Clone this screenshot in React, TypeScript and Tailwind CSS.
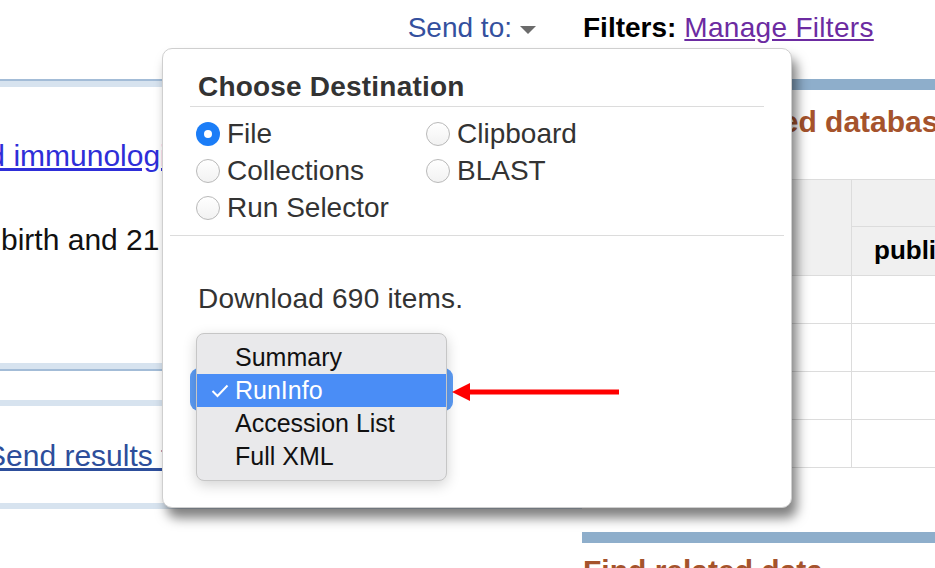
import React from 'react'

const Radio = ({ checked, label }: { checked?: boolean; label: string }) => (
  <div className="flex items-center gap-[7px]">
    {checked ? (
      <span className="w-[24px] h-[24px] rounded-full bg-[#1b7df7] flex items-center justify-center">
        <span className="w-[8px] h-[8px] rounded-full bg-white" />
      </span>
    ) : (
      <span className="w-[24px] h-[24px] rounded-full border border-[#b9b9b9] bg-gradient-to-b from-white to-[#f2f2f2]" />
    )}
    <span className="text-[28px] leading-[32px] text-[#333]">{label}</span>
  </div>
)

const App = () => {
  const items = ['Summary', 'RunInfo', 'Accession List', 'Full XML']

  return (
    <div className="relative w-[935px] h-[568px] overflow-hidden bg-white font-['Liberation_Sans',Arial,sans-serif] whitespace-nowrap">
      <div className="grid grid-cols-[582px_minmax(0,1fr)]">
        {/* left column */}
        <div>
          <div className="h-[79px] pt-[12px] pr-[46px] flex justify-end">
            <div className="flex items-center h-[32px] gap-[8px]">
              <span className="text-[28px] leading-[32px] text-[#34509e]">Send to:</span>
              <svg width="16" height="8" viewBox="0 0 16 8" className="mt-[4px]">
                <polygon points="0,0 16,0 8,8" fill="#6b6b6b" />
              </svg>
            </div>
          </div>
          <div className="h-[8px] border-t-2 border-[#a3bcd7] bg-[#d7e3ef]" />
          <a className="block mt-[52px] -ml-[45px] text-[30px] leading-[34px] text-[#2e2ed8] underline">
            and immunological profiling of infants
          </a>
          <p className="mt-[50px] ml-[1px] text-[30px] leading-[34px] text-[#111]">birth and 21 months of age</p>
          <div className="mt-[106px] h-[8px] border-b-2 border-[#a3bcd7] bg-[#d7e3ef]" />
          <div className="mt-[29px] h-[6px] bg-[#d7e3ef]" />
          <a className="block mt-[33px] -ml-[14px] text-[30px] leading-[34px] text-[#2d4e9b] underline">
            Send results to Run selector
          </a>
          <div className="mt-[30px] h-[6px] bg-[#d7e3ef]" />
        </div>

        {/* right column */}
        <div>
          <div className="h-[79px] pt-[12px] pl-[1px] flex items-start gap-[8px]">
            <span className="text-[28px] leading-[32px] font-bold text-black">Filters:</span>
            <a className="text-[28px] leading-[32px] text-[#6c2ba1] underline tracking-[0.3px]">Manage Filters</a>
          </div>
          <div className="h-[11px] bg-[#8eaecb]" />
          <h2 className="mt-[15px] -ml-[7px] text-[30px] leading-[34px] font-bold text-[#a5532c]">
            Search in related databases
          </h2>
          <div className="mt-[40px] ml-[10px] w-[460px] border-t border-l border-[#dcdcdc]">
            <div className="flex border-b border-[#dcdcdc]">
              <div className="w-[259px] h-[95px] bg-[#f0f0f0] border-r border-[#dcdcdc]" />
              <div className="flex-1 bg-[#f0f0f0]">
                <div className="h-[47px] border-b border-[#dcdcdc]" />
                <div className="h-[47px] flex items-center pl-[22px] text-[26px] font-bold text-black">published</div>
              </div>
            </div>
            {[0, 1, 2, 3].map(i => (
              <div key={i} className="flex border-b border-[#dcdcdc]">
                <div className="w-[259px] h-[47px] border-r border-[#dcdcdc]" />
                <div className="flex-1" />
              </div>
            ))}
          </div>
          <div className="mt-[64px] h-[11px] bg-[#8eaecb]" />
          <h2 className="mt-[11px] pl-[1px] text-[30px] leading-[34px] font-bold text-[#a5532c]">Find related data</h2>
        </div>
      </div>

      {/* send-to popup */}
      <div className="absolute left-[162px] top-[48px] w-[630px] h-[460px] rounded-[10px] border border-[#cfcfcf] bg-white shadow-[5px_10px_12px_rgba(0,0,0,0.5)]">
        <div className="px-[27px] pt-[22px]">
          <h2 className="pl-[8px] text-[28px] leading-[32px] font-bold text-[#333] tracking-[0.2px]">Choose Destination</h2>
          <div className="mt-[3px] border-b border-[#dcdcdc]" />
          <div className="mt-[8px] pl-[6px] grid grid-cols-[230px_1fr] auto-rows-[37px] items-center">
            <Radio checked label="File" />
            <Radio label="Clipboard" />
            <Radio label="Collections" />
            <Radio label="BLAST" />
            <Radio label="Run Selector" />
          </div>
        </div>
        <div className="mx-[7px] mt-[9px] border-t border-[#dcdcdc]" />
        <div className="px-[27px]">
          <p className="mt-[47px] pl-[8px] text-[28px] leading-[32px] text-[#333] tracking-[0.2px]">Download 690 items.</p>
          <div className="relative mt-[53px] w-[263px] h-[43px] rounded-[9px] bg-[#5c9cf6]">
            <div className="absolute left-[6px] top-[-35px] w-[251px] py-[7px] rounded-[8px] border border-[#c6c6c6] bg-[#e9e9eb] shadow-[0_4px_14px_rgba(0,0,0,0.18)]">
              {items.map(item => {
                const active = item === 'RunInfo'
                return (
                  <div
                    key={item}
                    className={`relative h-[33px] flex items-center pl-[38px] text-[25px] ${active ? 'bg-[#4a8df6] text-white' : 'text-[#111]'}`}
                  >
                    {active && (
                      <svg width="18" height="14" viewBox="0 0 18 14" className="absolute left-[14px] top-[10px]">
                        <polyline points="1.5,7 6.5,12 16.5,1.5" fill="none" stroke="white" strokeWidth="2" />
                      </svg>
                    )}
                    {item}
                  </div>
                )
              })}
            </div>
          </div>
        </div>
      </div>

      {/* annotation arrow */}
      <svg width="172" height="22" viewBox="0 0 172 22" className="absolute left-[450px] top-[381px]">
        <polygon points="2,11 20,2 20,20" fill="#ff0000" />
        <rect x="18" y="8.5" width="151" height="5" fill="#ff0000" />
      </svg>
    </div>
  )
}

export default App
